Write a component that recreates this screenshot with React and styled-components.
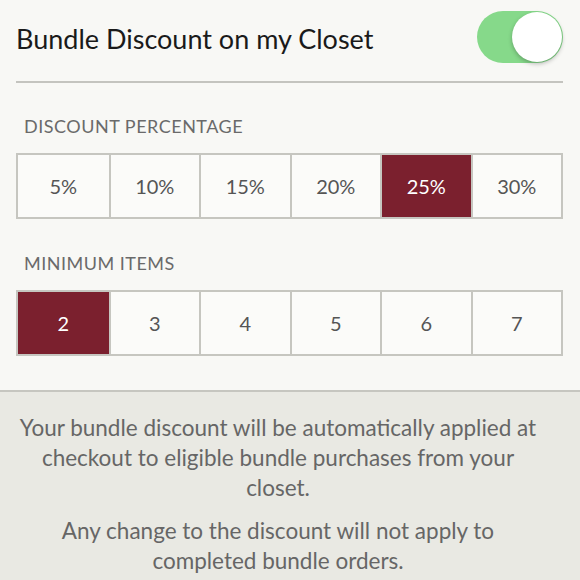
import React, { useState } from 'react'
import styled, { createGlobalStyle } from 'styled-components'

const GlobalStyle = createGlobalStyle`
  html, body {
    margin: 0;
    padding: 0;
    background: #f8f8f5;
  }
  body {
    font-family: Lato, "Open Sans", sans-serif;
  }
`

const Page = styled.div`
  width: 580px;
  height: 580px;
  display: flex;
  flex-direction: column;
  overflow: hidden;
  background: #f8f8f5;
`

const Settings = styled.div`
  padding: 0 17px 0 16px;
`

const Header = styled.div`
  display: flex;
  align-items: center;
  justify-content: space-between;
  height: 81px;
  border-bottom: 2px solid #c4c4bf;
`

const Title = styled.span`
  font-size: 27px;
  color: #1a1a1a;
  margin-top: -4px;
`

const Track = styled.button`
  position: relative;
  width: 86px;
  height: 52px;
  border: none;
  border-radius: 26px;
  background: ${({ on }) => (on ? '#86d98a' : '#dcdcd8')};
  cursor: pointer;
  padding: 0;
  margin-top: -8px;
`

const Knob = styled.span`
  position: absolute;
  top: 1px;
  left: ${({ on }) => (on ? '35px' : '1px')};
  width: 50px;
  height: 50px;
  border-radius: 50%;
  background: #fff;
  box-shadow: 0 2px 4px rgba(0, 0, 0, 0.25);
`

const Label = styled.div`
  margin: ${({ top }) => top}px 0 0 8px;
  font-size: 18px;
  line-height: 22px;
  letter-spacing: 0.5px;
  color: #6a6a6a;
  text-transform: uppercase;
`

const Segments = styled.div`
  display: grid;
  grid-template-columns: repeat(6, 1fr);
  margin-top: 16px;
  box-sizing: border-box;
  border: 2px solid #c6c6c0;
  background: #fbfbf9;
  height: 66px;
`

const Segment = styled.button`
  border: none;
  border-left: ${({ first }) => (first ? 'none' : '2px solid #c6c6c0')};
  background: ${({ active }) => (active ? '#7b202e' : 'transparent')};
  color: ${({ active }) => (active ? '#fff' : '#555')};
  font-family: inherit;
  font-size: 20px;
  padding: 0;
  cursor: pointer;
`

const Info = styled.div`
  margin-top: auto;
  height: 190px;
  box-sizing: border-box;
  border-top: 2px solid #c6c6c0;
  background: #e9e9e3;
  padding: 21px 41px 0 17px;
  text-align: center;
  color: #666;
  font-size: 22.5px;
  line-height: 30px;
`

const Para = styled.p`
  margin: 0 0 13px;
`

const percents = [5, 10, 15, 20, 25, 30]
const items = [2, 3, 4, 5, 6, 7]

const SegmentRow = ({ values, value, onChange, suffix = '' }) => (
  <Segments>
    {values.map((v, i) => (
      <Segment key={v} first={i === 0} active={v === value} onClick={() => onChange(v)}>
        {v}{suffix}
      </Segment>
    ))}
  </Segments>
)

const App = () => {
  const [on, setOn] = useState(true)
  const [percent, setPercent] = useState(25)
  const [minItems, setMinItems] = useState(2)

  return (
    <Page>
      <GlobalStyle />
      <Settings>
        <Header>
          <Title>Bundle Discount on my Closet</Title>
          <Track on={on} onClick={() => setOn(!on)}>
            <Knob on={on} />
          </Track>
        </Header>

        <Label top={32}>Discount Percentage</Label>
        <SegmentRow values={percents} value={percent} onChange={setPercent} suffix="%" />

        <Label top={33}>Minimum Items</Label>
        <SegmentRow values={items} value={minItems} onChange={setMinItems} />
      </Settings>

      <Info>
        <Para>
          Your bundle discount will be automatically applied at checkout to eligible bundle
          purchases from your closet.
        </Para>
        <Para>Any change to the discount will not apply to completed bundle orders.</Para>
      </Info>
    </Page>
  )
}

export default App
